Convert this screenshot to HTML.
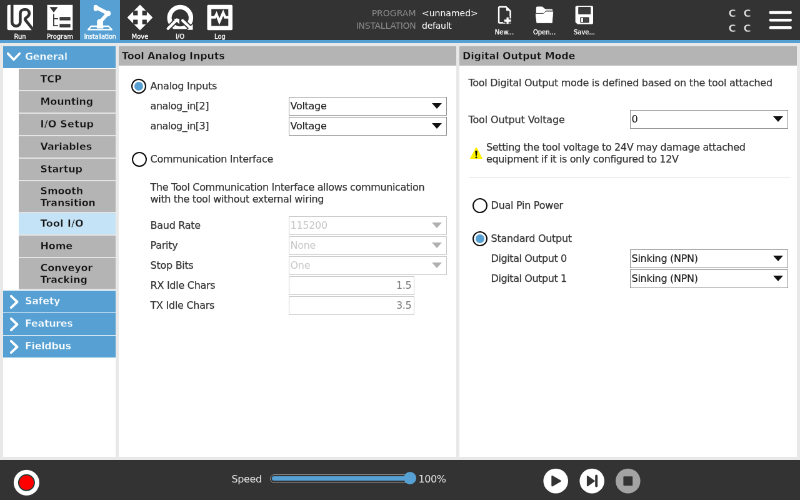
<!DOCTYPE html>
<html lang="en">
<head>
<meta charset="utf-8">
<title>PolyScope - Installation - Tool I/O</title>
<style>
*{box-sizing:border-box;margin:0;padding:0}
html,body{width:800px;height:500px;overflow:hidden;background:#e8e8e8}
body{font-family:"DejaVu Sans","Liberation Sans",sans-serif;color:#3c3c3c}
#stage{will-change:transform;position:absolute;left:0;top:0;width:1280px;height:800px;transform:scale(0.625);transform-origin:0 0;background:#e8e8e8;overflow:hidden;font-size:16px}
.abs{position:absolute}
/* header */
#hdr{position:absolute;left:0;top:0;width:1280px;height:64px;background:#333}
#strip{position:absolute;left:0;top:64px;width:1280px;height:5px;background:#56a0d3}
.nav{position:absolute;top:0;width:64px;height:64px;color:#fff;text-align:center}
.nav.sel{background:#56a0d3}
.nav .lbl{position:absolute;left:-10px;right:-10px;top:53.3px;font-size:10px;line-height:12px;white-space:nowrap;-webkit-text-stroke:0.3px #fff}
.nav svg{position:absolute;left:0;top:0}
.hl{position:absolute;color:#8a8a8a;font-size:14px;line-height:16px;text-align:right;white-space:nowrap}
.hv{position:absolute;color:#fff;font-size:14px;line-height:16px;white-space:nowrap}
.fb{position:absolute;top:0;width:64px;height:64px;color:#fff}
.fb .lbl{position:absolute;left:-10px;right:-10px;top:45.5px;font-size:10px;line-height:12px;text-align:center;white-space:nowrap;-webkit-text-stroke:0.3px #fff}
.cc{font-size:16.5px;line-height:18px;font-weight:bold;color:#e6e6e6;-webkit-text-stroke:0.5px #333}
/* sidebar */
#side{position:absolute;left:5px;top:74px;width:180px;height:657px;background:#fff}
.grp{position:absolute;left:0;width:180px;height:35px;background:#56a0d3;color:#fff;font-weight:bold;font-size:16px;-webkit-text-stroke:0.45px #56a0d3;letter-spacing:-0.35px;line-height:33px;padding-left:35px;white-space:nowrap}
.itm{position:absolute;left:25px;width:155px;height:34px;background:#b4b4b4;color:#111;font-weight:bold;font-size:16px;-webkit-text-stroke:0.45px #b4b4b4;letter-spacing:-0.15px;line-height:34.4px;padding-left:34.6px;white-space:nowrap}
.itm.two{height:49px;line-height:19px;padding-top:6px;white-space:normal}
.itm.cur{background:#c5e3f6;-webkit-text-stroke-color:#c5e3f6}
.itm{box-shadow:0 2px 0 #e4e4e4}
.sep{position:absolute;left:25px;width:155px;height:2px;background:#dcdcdc}
/* panels */
.panel{position:absolute;top:74px;width:540px;height:657px;background:#fff}
.ph{position:absolute;left:0;top:0;width:540px;height:31px;background:#b4b4b4;color:#111;font-weight:bold;font-size:16px;-webkit-text-stroke:0.45px #b4b4b4;letter-spacing:-0.15px;line-height:31px;padding-left:5px;white-space:nowrap}
.t{position:absolute;font-size:16px;line-height:20px;white-space:nowrap;color:#333;letter-spacing:-0.28px;-webkit-text-stroke:0.25px #333}
.radio{position:absolute;width:24px;height:24px;border-radius:50%;border:2.4px solid #0a0a0a;background:#fff}
.radio.on::after{content:"";position:absolute;left:2.6px;top:2.6px;width:14px;height:14px;border-radius:50%;background:#56a0d3}
.cb{position:absolute;width:253px;height:29.6px;border:1px solid #8c8c8c;background:#fff;font-size:16px;line-height:27.6px;padding-left:1.5px;color:#222;white-space:nowrap;letter-spacing:-0.28px;-webkit-text-stroke:0.2px #222}
.cb::after{content:"";position:absolute;right:7px;top:9.3px;border-left:8px solid transparent;border-right:8px solid transparent;border-top:9px solid #111}
.cb.dis{color:#c6c6c6;border-color:#c8c8c8;-webkit-text-stroke:0}
.cb.dis::after{border-top-color:#b0b0b0}
.tf{position:absolute;width:201px;height:29.6px;letter-spacing:-0.28px;border:1px solid #c8c8c8;background:#fff;font-size:16px;line-height:27.6px;padding-right:3.5px;text-align:right;color:#777}
/* footer */
#ftr{position:absolute;left:0;top:736px;width:1280px;height:64px;background:#333}
</style>
</head>
<body>
<div id="stage">
  <div id="hdr">
    <div class="nav" style="left:0"><svg width="64" height="64" viewBox="0 0 64 64"><rect x="11.5" y="7.8" width="41.5" height="40.4" rx="3" fill="#fff"/><path d="M19.2 6.5 V35.2 a6.6 6.6 0 0 0 13.2 0 V21.6 a6.3 6.3 0 0 1 6.3 -6.3 h2.2 a6 6 0 0 1 6 6 c0 2.6 -1.2 4.2 -3.2 5.7 l-2.6 2 c-1.2 1 -1.3 2.2 -0.3 3.3 L54 48.6" fill="none" stroke="#333" stroke-width="4.6"/></svg><div class="lbl">Run</div></div>
    <div class="nav" style="left:64px"><svg width="64" height="64" viewBox="0 0 64 64"><rect x="11.5" y="7.8" width="40.8" height="40.4" fill="#fff"/><path d="M15.4 11.2 h13.2 l-6.6 8.8 z" fill="#333"/><path d="M21.9 22.6 V41.1 H29 M21.9 29.9 H29" fill="none" stroke="#333" stroke-width="1.7"/><rect x="31.4" y="27.2" width="17.2" height="5.4" fill="#333"/><rect x="31.4" y="38.4" width="17.2" height="5.4" fill="#333"/><path d="M32.5 29.9 H47.5 M32.5 41.1 H47.5" stroke="#555" stroke-width="0.8"/></svg><div class="lbl">Program</div></div>
    <div class="nav sel" style="left:128px"><svg width="64" height="64" viewBox="0 0 64 64"><path d="M17.8 42 H45.6 L50.8 47.4 H13.2 Z" fill="none" stroke="#fff" stroke-width="2.4" stroke-linejoin="round"/><path d="M27.2 45 L28.4 35 H35.8 L37.2 45 Z" fill="#fff" stroke="#fff" stroke-width="1" stroke-linejoin="round"/><circle cx="32" cy="35.4" r="5" fill="#fff"/><path d="M32 35.4 L44.4 21.6" stroke="#fff" stroke-width="5.8" stroke-linecap="round"/><circle cx="44.6" cy="21.6" r="4.7" fill="#fff"/><path d="M44.4 21.4 L27.5 12.6" stroke="#fff" stroke-width="6" stroke-linecap="round"/><path d="M25.1 11 V14.4" stroke="#fff" stroke-width="6.6" stroke-linecap="round"/></svg><div class="lbl" style="letter-spacing:-0.37px">Installation</div></div>
    <div class="nav" style="left:192px"><svg width="64" height="64" viewBox="0 0 64 64"><path d="M32 7.6 L52.4 28 L32 48.4 L11.6 28 Z" fill="#fff"/><path d="M21.1 17.1 h7.3 v7.3 h-7.3 z M35.6 17.1 h7.3 v7.3 h-7.3 z M21.1 31.6 h7.3 v7.3 h-7.3 z M35.6 31.6 h7.3 v7.3 h-7.3 z" fill="#333"/></svg><div class="lbl">Move</div></div>
    <div class="nav" style="left:256px"><svg width="64" height="64" viewBox="0 0 64 64"><defs><clipPath id="ioc"><rect x="0" y="0" width="64" height="46.6"/></clipPath></defs><circle cx="32.3" cy="28.6" r="17.2" fill="none" stroke="#fff" stroke-width="7.2" clip-path="url(#ioc)"/><path d="M12.8 45.8 L27 31.6 M35.5 32 L48 44" stroke="#333" stroke-width="8" stroke-linecap="butt"/><path d="M21.8 30 H31 V38.8 Z M52.5 38.6 V47.7 H43.4 Z" fill="#333" stroke="#333" stroke-width="3.2" stroke-linejoin="miter"/><path d="M12.8 45.8 L27 31.6 M36.2 32.8 L48 44" stroke="#fff" stroke-width="4.4" stroke-linecap="round"/><path d="M21.8 30 H31 V38.8 Z" fill="#fff"/><path d="M52.5 38.6 V47.7 H43.4 Z" fill="#fff"/></svg><div class="lbl">I/O</div></div>
    <div class="nav" style="left:320px"><svg width="64" height="64" viewBox="0 0 64 64"><rect x="11.5" y="7.8" width="40.5" height="40.5" rx="2" fill="#fff"/><rect x="18.2" y="14.5" width="27.1" height="27.1" fill="#333"/><path d="M17 27.8 H23.8 L26.4 22.6 L31 34.6 L37.1 20.4 L40.3 27.8 H47" fill="none" stroke="#fff" stroke-width="4" stroke-linejoin="miter" stroke-miterlimit="10"/></svg><div class="lbl">Log</div></div>
    <div class="hl" style="left:521.5px;width:144px;top:13px">PROGRAM</div>
    <div class="hv" style="left:675px;top:13px">&lt;unnamed&gt;</div>
    <div class="hl" style="left:521.5px;width:144px;top:33px;letter-spacing:-0.28px">INSTALLATION</div>
    <div class="hv" style="left:675px;top:33px;letter-spacing:-0.25px">default</div>
    <div class="fb" style="left:775px"><svg width="64" height="64" viewBox="0 0 64 64"><path d="M23.1 12.4 a1.4 1.4 0 0 1 1.4 -1.4 H34.6 L41.5 17.6 V35.2 a1.4 1.4 0 0 1 -1.4 1.4 H24.5 a1.4 1.4 0 0 1 -1.4 -1.4 Z" fill="none" stroke="#fff" stroke-width="2.5" stroke-linejoin="round"/><path d="M35 11.6 V17.2 H40.8 Z" fill="#fff"/><path d="M30 33 H44 M37 26 V40" stroke="#333" stroke-width="6.8" /><path d="M31.8 33 H42.6 M37.1 27.8 V38.2" stroke="#fff" stroke-width="3.3"/></svg><div class="lbl">New...</div></div>
    <div class="fb" style="left:839px"><svg width="64" height="64" viewBox="0 0 64 64"><path d="M18.8 12.4 a1.8 1.8 0 0 1 1.8 -1.8 H28.6 L33.4 14.4 H43.6 a1.6 1.6 0 0 1 1.6 1.6 V24 H18.8 Z" fill="#fff"/><path d="M35 16.4 H45" stroke="#c4c4c4" stroke-width="1.6"/><path d="M17.3 22.8 a1.4 1.4 0 0 1 1.4 -1.4 H30.4 L34.2 18 H45.3 a1.4 1.4 0 0 1 1.4 1.5 L45.3 36 a1.5 1.5 0 0 1 -1.5 1.4 H20.3 a1.5 1.5 0 0 1 -1.5 -1.4 Z" fill="#fff" stroke="#333" stroke-width="1"/></svg><div class="lbl">Open...</div></div>
    <div class="fb" style="left:903px"><svg width="64" height="64" viewBox="0 0 64 64"><path d="M17.6 11.4 a2 2 0 0 1 2 -2 H44 a2 2 0 0 1 2 2 V36.7 a2 2 0 0 1 -2 2 H21 L17.6 35.4 Z" fill="#fff"/><rect x="22.2" y="11" width="20" height="12" rx="1.2" fill="#3a3a3a"/><rect x="25.3" y="27.4" width="14.3" height="9" rx="0.8" fill="#333"/><rect x="26.9" y="28.8" width="3" height="6.4" fill="#fff"/><rect x="31.2" y="29" width="7" height="6" fill="#444"/></svg><div class="lbl">Save...</div></div>
    <div class="abs cc" style="left:1165.5px;top:12.6px">C</div><div class="abs cc" style="left:1189.5px;top:12.6px">C</div>
    <div class="abs cc" style="left:1165.5px;top:37.2px">C</div><div class="abs cc" style="left:1189.5px;top:37.2px">C</div>
    <svg class="abs" style="left:1226px;top:14.4px" width="46" height="36" viewBox="0 0 46 36"><path d="M6.7 6 H38.8 M6.7 18.2 H38.8 M6.7 30.3 H38.8" stroke="#fff" stroke-width="4.4" stroke-linecap="round"/></svg>
  </div>
  <div id="strip"></div>
  <div id="side">
    <div class="grp" style="top:0"><svg class="abs" style="left:6px;top:10px" width="22" height="14" viewBox="0 0 22 14"><path d="M1.5 1.5 L11 11.5 L20.5 1.5" fill="none" stroke="#fff" stroke-width="3.6" stroke-linecap="round" stroke-linejoin="round"/></svg>General</div>
    <div class="itm" style="top:36px">TCP</div>
    <div class="itm" style="top:72px">Mounting</div>
    <div class="itm" style="top:108px;letter-spacing:0.2px">I/O Setup</div>
    <div class="itm" style="top:144px">Variables</div>
    <div class="itm" style="top:180px">Startup</div>
    <div class="itm two" style="top:216px">Smooth<br>Transition</div>
    <div class="itm cur" style="top:267px;letter-spacing:0.25px">Tool I/O</div>
    <div class="itm" style="top:303px">Home</div>
    <div class="itm two" style="top:339px">Conveyor<br>Tracking</div>
    <div class="grp" style="top:391px"><svg class="abs" style="left:10.5px;top:6.5px" width="14" height="22" viewBox="0 0 14 22"><path d="M1.8 1.8 L11.5 11 L1.8 20.2" fill="none" stroke="#fff" stroke-width="3.8" stroke-linecap="round" stroke-linejoin="round"/></svg>Safety</div>
    <div class="grp" style="top:427px"><svg class="abs" style="left:10.5px;top:6.5px" width="14" height="22" viewBox="0 0 14 22"><path d="M1.8 1.8 L11.5 11 L1.8 20.2" fill="none" stroke="#fff" stroke-width="3.8" stroke-linecap="round" stroke-linejoin="round"/></svg>Features</div>
    <div class="grp" style="top:463px"><svg class="abs" style="left:10.5px;top:6.5px" width="14" height="22" viewBox="0 0 14 22"><path d="M1.8 1.8 L11.5 11 L1.8 20.2" fill="none" stroke="#fff" stroke-width="3.8" stroke-linecap="round" stroke-linejoin="round"/></svg>Fieldbus</div>
  </div>
  <div class="panel" id="p1" style="left:190px"><div class="ph">Tool Analog Inputs</div>
    <div class="radio on" style="left:20px;top:52px"></div>
    <div class="t" style="left:50.6px;top:54px">Analog Inputs</div>
    <div class="t" style="left:50.6px;top:86px;letter-spacing:-0.5px">analog_in[2]</div>
    <div class="cb" style="left:272px;top:81px">Voltage</div>
    <div class="t" style="left:50.6px;top:118px;letter-spacing:-0.5px">analog_in[3]</div>
    <div class="cb" style="left:272px;top:113px">Voltage</div>
    <div class="radio" style="left:21px;top:169px"></div>
    <div class="t" style="left:50.6px;top:171px">Communication Interface</div>
    <div class="t" style="left:50.6px;top:216px;line-height:19px;letter-spacing:-0.36px">The Tool Communication Interface allows communication<br>with the tool without external wiring</div>
    <div class="t" style="left:50.6px;top:277px">Baud Rate</div>
    <div class="cb dis" style="left:272px;top:272px">115200</div>
    <div class="t" style="left:50.6px;top:309px">Parity</div>
    <div class="cb dis" style="left:272px;top:304px">None</div>
    <div class="t" style="left:50.6px;top:341px">Stop Bits</div>
    <div class="cb dis" style="left:272px;top:336px">One</div>
    <div class="t" style="left:50.6px;top:373px">RX Idle Chars</div>
    <div class="tf" style="left:272px;top:368px">1.5</div>
    <div class="t" style="left:50.6px;top:405px">TX Idle Chars</div>
    <div class="tf" style="left:272px;top:400px">3.5</div>
  </div>
  <div class="panel" id="p2" style="left:735px"><div class="ph">Digital Output Mode</div>
    <div class="t" style="left:14.5px;top:49px">Tool Digital Output mode is defined based on the tool attached</div>
    <div class="t" style="left:14.5px;top:108px;letter-spacing:-0.14px">Tool Output Voltage</div>
    <div class="cb" style="left:273px;top:102px">0</div>
    <svg class="abs" style="left:17px;top:160.6px" width="20" height="20" viewBox="0 0 20 20"><path d="M10 2 L18.6 18.6 L1.4 18.6 Z" fill="#fff200" stroke="#fff200" stroke-width="2.4" stroke-linejoin="round"/><path d="M8.2 6.6 Q10 5.6 11.8 6.6 L10.9 14.6 H9.1 Z" fill="#0a0a0a"/><ellipse cx="10" cy="16.9" rx="1.5" ry="1.3" fill="#0a0a0a"/></svg>
    <div class="t" style="left:43px;top:151.5px;line-height:19px;letter-spacing:-0.36px">Setting the tool voltage to 24V may damage attached<br>equipment if it is only configured to 12V</div>
    <div class="abs" style="left:15px;top:209px;width:515px;height:1px;background:#dcdcdc"></div>
    <div class="radio" style="left:21px;top:243px"></div>
    <div class="t" style="left:50.6px;top:245px">Dual Pin Power</div>
    <div class="radio on" style="left:21px;top:296px"></div>
    <div class="t" style="left:50.6px;top:298px">Standard Output</div>
    <div class="t" style="left:50.6px;top:330px;letter-spacing:-0.42px">Digital Output 0</div>
    <div class="cb" style="left:273px;top:325px">Sinking (NPN)</div>
    <div class="t" style="left:50.6px;top:362px;letter-spacing:-0.42px">Digital Output 1</div>
    <div class="cb" style="left:273px;top:357px">Sinking (NPN)</div>
  </div>
  <div id="ftr">
    <svg class="abs" style="left:20px;top:14px" width="46" height="46" viewBox="0 0 46 46"><circle cx="22.4" cy="22.2" r="20.5" fill="#fff"/><circle cx="22.4" cy="22.2" r="13.5" fill="#1d3a3a"/><circle cx="22.4" cy="22.2" r="11.6" fill="#fe0000"/></svg>
    <div class="abs" style="left:370.5px;top:21.4px;font-size:16px;line-height:20px;color:#e4e4e4;letter-spacing:-0.4px">Speed</div>
    <div class="abs" style="left:431.5px;top:22.5px;width:230px;height:14px;border-radius:7px;border:1.6px solid #9a9a9a;background:#333"></div>
    <div class="abs" style="left:434.6px;top:25.7px;width:224px;height:7.6px;border-radius:3.8px;background:#56a0d3"></div>
    <div class="abs" style="left:646px;top:19.3px;width:20px;height:20px;border-radius:50%;background:#56a0d3"></div>
    <div class="abs" style="left:669.5px;top:21.4px;font-size:16px;line-height:20px;color:#e4e4e4;letter-spacing:-0.4px">100%</div>
    <svg class="abs" style="left:866px;top:11px" width="166" height="46" viewBox="0 0 166 46"><circle cx="23.2" cy="22.6" r="19.8" fill="#fff"/><path d="M17.5 15 L30.5 22.6 L17.5 30.2 Z" fill="#333" stroke="#333" stroke-width="2.4" stroke-linejoin="round"/><circle cx="81.2" cy="22.6" r="19.8" fill="#fff"/><path d="M74 15.2 L84.6 22.6 L74 30 Z" fill="#333" stroke="#333" stroke-width="2.2" stroke-linejoin="round"/><path d="M88.2 14.6 V30.6" stroke="#333" stroke-width="4" stroke-linecap="round"/><circle cx="138.8" cy="22.6" r="19.8" fill="#a3a3a3"/><rect x="131.4" y="15.2" width="14.8" height="14.8" rx="1" fill="#333"/></svg>
  </div>
</div>
</body>
</html>
